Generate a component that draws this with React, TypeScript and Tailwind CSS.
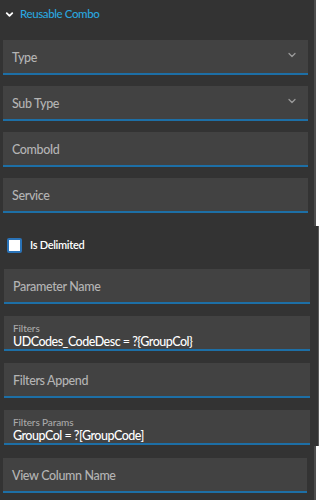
import { ChevronDown } from 'lucide-react';

const font = { fontFamily: 'Lato, "Open Sans", sans-serif' };

function Field({ label, value, select }: { label: string; value?: string; select?: boolean }) {
  if (value) {
    return (
      <div className="h-[35px] bg-[#424242] border-b-2 border-[#1d6fa6] px-[9px] pt-[6px] flex flex-col">
        <span className="text-[10px] leading-[12px] font-medium tracking-[-0.1px] text-[#a9a9a9]">{label}</span>
        <span className="text-[12.5px] leading-[15px] font-medium tracking-[-0.5px] text-white">{value}</span>
      </div>
    );
  }
  return (
    <div className="h-[35px] bg-[#424242] border-b-2 border-[#1d6fa6] pl-[9px] pr-[10px] flex items-center justify-between">
      <span className="text-[12.5px] font-medium tracking-[-0.35px] text-[#b4b4b4] pt-[3px]">{label}</span>
      {select && <ChevronDown className="w-[12px] h-[12px] text-[#9a9a9a] -mt-[3px]" strokeWidth={2.5} />}
    </div>
  );
}

export default function App() {
  return (
    <div className="w-[320px] h-[500px] bg-white overflow-hidden" style={font}>
      {/* top panel */}
      <div className="w-[316px] h-[226px] bg-[#333333] border-r-2 border-[#4c4c4c] pl-[3px] pr-[6px]">
        <div className="h-[30px] flex items-center gap-[5px] pl-[1px] pb-[2px]">
          <ChevronDown className="w-[11px] h-[11px] text-white" strokeWidth={4} />
          <span className="text-[11.5px] font-medium tracking-[-0.4px] text-[#2aa6df]">Reusable Combo</span>
        </div>
        <div className="flex flex-col gap-[11px] mt-[10px]">
          <Field label="Type" select />
          <Field label="Sub Type" select />
          <Field label="ComboId" />
          <Field label="Service" />
        </div>
      </div>

      {/* middle panel */}
      <div className="w-[319px] h-[220px] bg-[#333333] border-r border-[#5a5a5a] pl-[4px] pr-[8px]">
        <div className="h-[37px] flex items-center gap-[8px] pl-[3px] pt-[1px]">
          <div className="w-[15px] h-[15px] bg-white border-2 border-[#2a73b8] rounded-[2px]" />
          <span className="text-[11px] font-semibold tracking-[-0.3px] text-white">Is Delimited</span>
        </div>
        <div className="flex flex-col gap-[12px] mt-[6px]">
          <Field label="Parameter Name" />
          <Field label="Filters" value="UDCodes_CodeDesc = ?{GroupCol}" />
          <Field label="Filters Append" />
          <Field label="Filters Params" value="GroupCol = ?[GroupCode]" />
        </div>
      </div>

      {/* bottom panel */}
      <div className="w-[316px] h-[54px] bg-[#333333] border-r-2 border-[#4c4c4c] pl-[3px] pr-[7px] pt-[12px]">
        <Field label="View Column Name" />
      </div>
    </div>
  );
}
